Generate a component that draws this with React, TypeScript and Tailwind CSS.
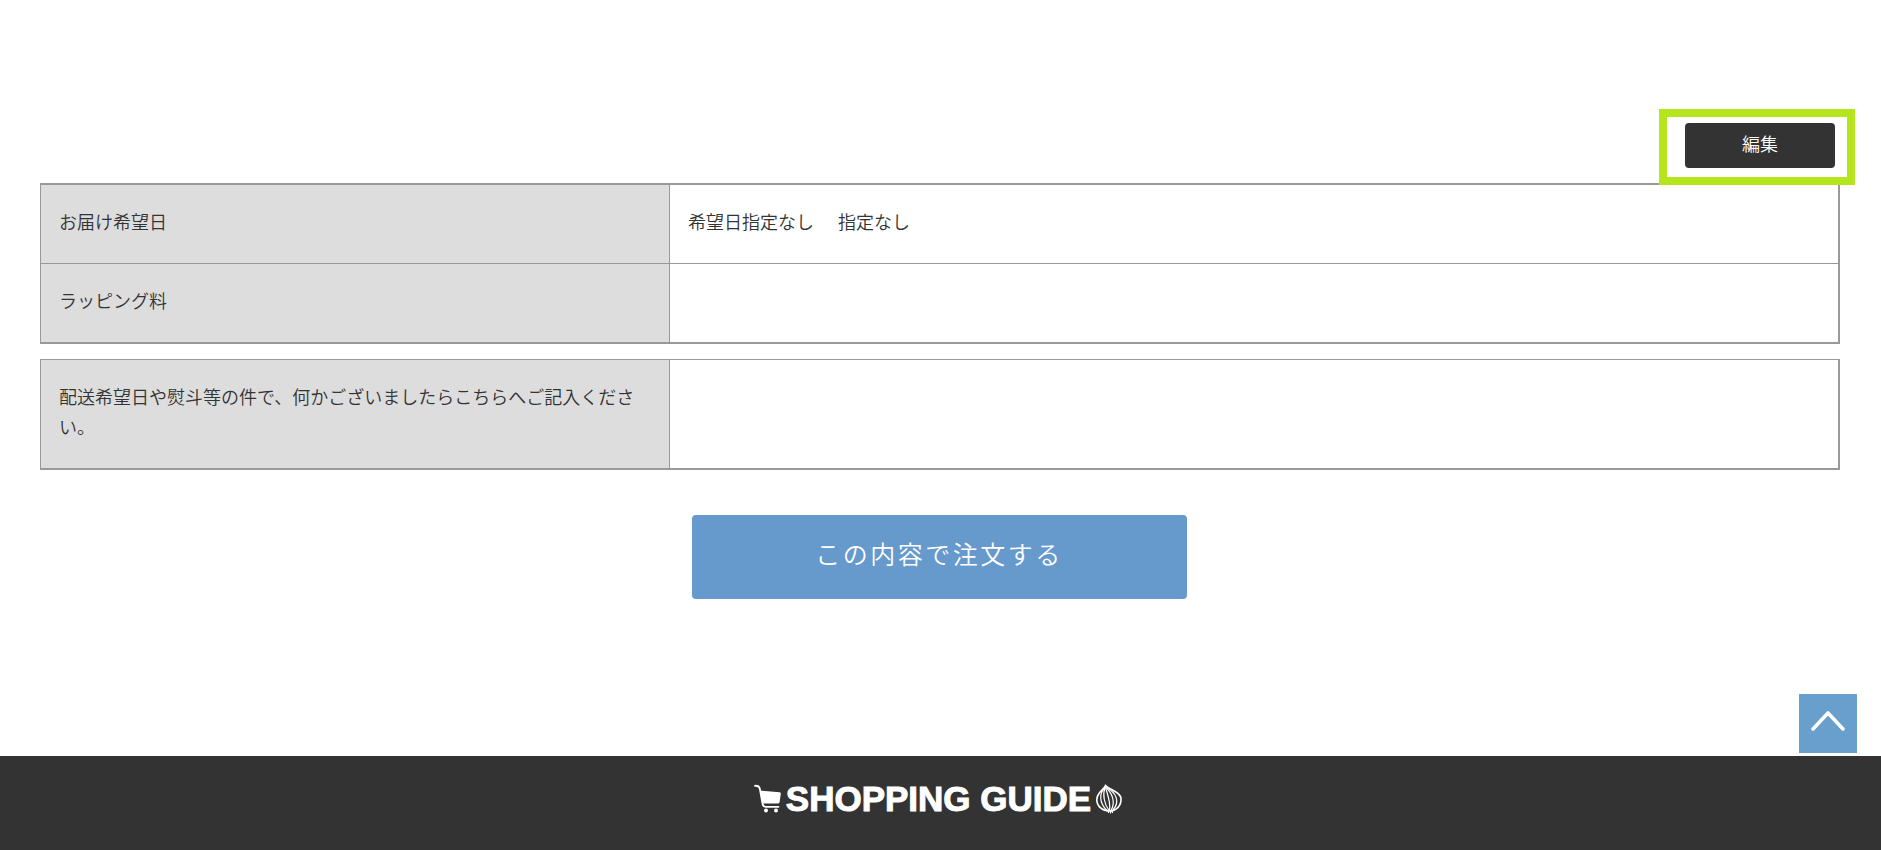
import React from "react";

type Row = { label: string; values: string[] };

const deliveryRows: Row[] = [
  { label: "お届け希望日", values: ["希望日指定なし", "指定なし"] },
  { label: "ラッピング料", values: [] },
];

const noteRows: Row[] = [
  {
    label: "配送希望日や熨斗等の件で、何かございましたらこちらへご記入ください。",
    values: [],
  },
];

function InfoTable({ rows, thickTop = false }: { rows: Row[]; thickTop?: boolean }) {
  return (
    <table
      className={
        "w-full table-fixed border-separate border-spacing-0 border-l border-r-2 border-b-2 border-[#999] " +
        (thickTop ? "border-t-2" : "border-t")
      }
    >
      <tbody>
        {rows.map((row, i) => {
          const divider = i > 0 ? " border-t" : "";
          return (
            <tr key={row.label}>
              <th
                scope="row"
                className={
                  "w-[35%] border-r border-[#999] bg-[#ddd] px-[18px] pt-[21px] pb-[27px] text-left align-top font-[350]" +
                  divider
                }
              >
                {row.label}
              </th>
              <td className={"border-[#999] px-[18px] pt-[21px] pb-[27px] align-top" + divider}>
                <div className="flex gap-6">
                  {row.values.map((v) => (
                    <span key={v}>{v}</span>
                  ))}
                </div>
              </td>
            </tr>
          );
        })}
      </tbody>
    </table>
  );
}

function CartIcon() {
  return (
    <svg viewBox="0 0 28 30" className="h-[30px] w-7" aria-hidden="true">
      <path d="M1 1.8 Q4.800 1.400 5.800 4.600 L8.600 20 Q9 22.800 11.500 22.800 H24.500" fill="none" stroke="#fff" strokeWidth="1.8" strokeLinecap="round" />
      <path d="M6 6.600 L25.800 8.200 Q27 8.400 26.800 9.800 L25.600 18 Q25.300 19.600 23.800 19.600 H8.600 Z" fill="#fff" />
      <circle cx="12" cy="26.600" r="2" fill="#fff" />
      <circle cx="22" cy="26.600" r="2" fill="#fff" />
    </svg>
  );
}

function OnionIcon() {
  return (
    <svg viewBox="0 0 28 30" className="h-[30px] w-7" fill="none" stroke="#fff" strokeWidth="1.200" strokeLinecap="round" aria-hidden="true">
      <path d="M10.500 1.500 C9 6 2 8 1.800 15.500 C1.600 22.500 8 27 14 27 C21 27 26.500 22 26 14.500 C25.500 8 16 6.500 10.500 1.500 Z" strokeWidth="1.600" />
      <path d="M10 3.500 C4 9 4 19 12 26.500" />
      <path d="M10 3.500 C7.500 10 9 20 14 26.500" />
      <path d="M10.500 3.500 C12 9 16 18 14.500 26.500" />
      <path d="M11 3.500 C17 9 21 18 16 26.500" />
      <path d="M12 4 C20 8 26 17 18 26" />
      <path d="M13.500 28.500 L13 27 M15.500 29 V27 M17.500 28.500 L17 27" />
    </svg>
  );
}

export default function App() {
  return (
    <div className="flex min-h-screen flex-col bg-white font-['Noto_Sans_CJK_JP',sans-serif] text-lg/[30px] font-[350] text-[#333]">
      <main className="pr-[41px] pl-10 pt-[123px]">
        <div className="mb-[15px] flex justify-end pr-[5px]">
          <div className="relative">
            <button type="button" className="block h-[45px] w-[150px] rounded bg-[#333] pb-[6px] text-white">
              編集
            </button>
            <div className="pointer-events-none absolute -top-[14px] -right-5 -bottom-[17px] -left-[26px] border-8 border-[#b5e61d]" />
          </div>
        </div>
        <InfoTable rows={deliveryRows} thickTop />
        <div className="mt-[15px]">
          <InfoTable rows={noteRows} />
        </div>
        <div className="mt-[45px] flex justify-center pr-[2px]">
          <button type="button" className="h-[84px] w-[495px] rounded bg-[#6699cc] pb-2 text-[25px] tracking-widest text-white">
            この内容で注文する
          </button>
        </div>
      </main>

      <div className="mt-auto flex justify-end pt-10 pr-6 pb-[3px]">
        <a href="#root" aria-label="ページの先頭へ" className="flex h-[59px] w-[58px] items-center justify-center bg-[#689fcc]">
          <svg viewBox="0 0 58 59" className="h-[59px] w-[58px]" fill="none" stroke="#fff" strokeWidth="3.6" strokeLinecap="round" strokeLinejoin="round" aria-hidden="true">
            <path d="M14 35 L29 19 L44 35" />
          </svg>
        </a>
      </div>
      <footer className="flex h-[94px] items-start justify-center bg-[#333] pt-[25px] pr-1">
        <h2 className="flex items-center gap-1 font-['Liberation_Sans',sans-serif] text-[35px]/[36px] font-black text-white [-webkit-text-stroke:1px_white]">
          <CartIcon />
          SHOPPING GUIDE
          <OnionIcon />
        </h2>
      </footer>
    </div>
  );
}
